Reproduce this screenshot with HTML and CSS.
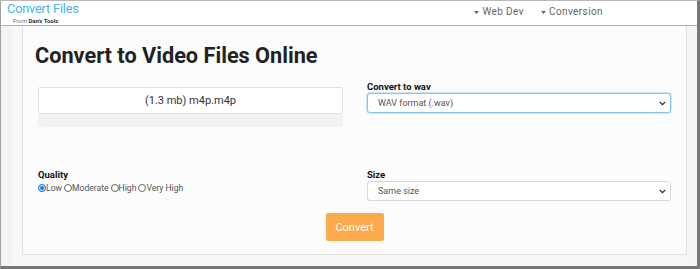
FILE: index.html
```html
<!DOCTYPE html>
<html>
<head>
<meta charset="utf-8">
<link rel="stylesheet" href="styles.css">
</head>
<body>
<div class="frame">
  <header class="topbar">
    <div class="brand">
      <div class="brand-title">Convert Files</div>
      <div class="brand-sub">From <b>Dan's Tools</b></div>
    </div>
    <nav class="nav">
      <span class="nav-item"><svg class="caret" width="5" height="3" viewBox="0 0 5 3"><path d="M0 0H5L2.5 3Z" fill="#666"/></svg>Web Dev</span>
      <span class="nav-item"><svg class="caret" width="5" height="3" viewBox="0 0 5 3"><path d="M0 0H5L2.5 3Z" fill="#666"/></svg>Conversion</span>
    </nav>
  </header>
  <div class="main">
    <div class="gutter-left"></div>
    <section class="card">
      <h1 class="title">Convert to Video Files Online</h1>
      <div class="grid">
        <div class="col">
          <div class="filebox">(1.3 mb) m4p.m4p</div>
          <div class="progress"></div>
        </div>
        <div class="col">
          <div class="label">Convert to wav</div>
          <div class="select focus">
            <span>WAV format (.wav)</span>
            <svg class="chev" width="7" height="5" viewBox="0 0 7 5"><path d="M0.8 1L3.5 3.7L6.2 1" fill="none" stroke="#333" stroke-width="1.3"/></svg>
          </div>
        </div>
        <div class="col row2">
          <div class="label">Quality</div>
          <div class="radios">
            <span class="radio checked"></span><span class="rtext">Low</span>
            <span class="radio"></span><span class="rtext">Moderate</span>
            <span class="radio"></span><span class="rtext">High</span>
            <span class="radio"></span><span class="rtext">Very High</span>
          </div>
        </div>
        <div class="col row2">
          <div class="label">Size</div>
          <div class="select">
            <span>Same size</span>
            <svg class="chev" width="7" height="5" viewBox="0 0 7 5"><path d="M0.8 1L3.5 3.7L6.2 1" fill="none" stroke="#333" stroke-width="1.3"/></svg>
          </div>
        </div>
      </div>
      <div class="actions">
        <button class="btn">Convert</button>
      </div>
    </section>
    <div class="gutter-right"></div>
  </div>
</div>
</body>
</html>
```
FILE: styles.css
```css
* { box-sizing: border-box; }
html, body { margin: 0; padding: 0; }
body {
  width: 700px;
  height: 269px;
  font-family: Roboto, "Liberation Sans", Arial, sans-serif;
  background: #fff;
  overflow: hidden;
}
.frame {
  width: 700px;
  height: 269px;
  border-left: 1px solid #a0a0a0;
  border-right: 3px solid #777;
  border-bottom: 3px solid #777;
  border-top: 1px solid #b8b8b8;
  background: #f7f7f7;
  display: flex;
  flex-direction: column;
}
.topbar {
  height: 25px;
  background: #fff;
  border-bottom: 1px solid #6cc9e9;
  display: flex;
  justify-content: space-between;
  align-items: flex-start;
  padding-left: 6px;
  flex: none;
}
.brand-title {
  font-size: 12.8px;
  line-height: 14px;
  color: #4ab3e6;
  margin-top: 1px;
  letter-spacing: -0.2px;
}
.brand-sub {
  font-size: 6px;
  line-height: 7px;
  color: #777;
  padding-left: 6px;
  margin-top: 1px;
}
.brand-sub b { color: #333; }
.nav {
  display: flex;
  gap: 17px;
  padding-right: 94px;
  padding-top: 5px;
}
.nav-item {
  font-size: 10px;
  line-height: 12px;
  color: #666;
  letter-spacing: 0.4px;
  display: flex;
  align-items: center;
}
.caret { margin-right: 3px; }
.main {
  flex: 1;
  display: flex;
  min-height: 0;
}
.gutter-left {
  width: 21px;
  flex: none;
  background: linear-gradient(to right, #f3f3f3 0, #f3f3f3 11px, #f8f8f8 11px);
}
.gutter-right {
  flex: 1;
  background: #f5f5f5;
}
.card {
  width: 665px;
  flex: none;
  height: 229px;
  background: #fcfcfc;
  border: 1px solid #e2e2e2;
  border-top: none;
  padding: 18px 15px 0 15px;
}
.title {
  margin: 0 0 0 -3px;
  font-size: 21.7px;
  line-height: 24px;
  font-weight: 700;
  color: #222;
}
.grid {
  display: grid;
  grid-template-columns: 305px 304px;
  column-gap: 24px;
  margin-top: 13px;
  align-items: start;
}
.row2 { margin-top: 42px; }
.label {
  font-size: 9.5px;
  line-height: 12px;
  font-weight: 700;
  color: #111;
}
.filebox {
  margin-top: 6px;
  height: 27px;
  background: #fff;
  border: 1px solid #e0e0e0;
  border-radius: 2px;
  font-size: 11px;
  color: #333;
  display: flex;
  align-items: center;
  justify-content: center;
}
.progress {
  height: 13px;
  background: #f2f2f2;
  border-radius: 0 0 3px 3px;
}
.select {
  position: relative;
  height: 20px;
  background: #fff;
  border: 1px solid #d8d8d8;
  border-radius: 3px;
  font-size: 9px;
  color: #555;
  display: flex;
  align-items: center;
  padding-left: 10px;
}
.select.focus {
  border-color: #86c3ee;
  box-shadow: 0 0 0 1px rgba(120, 190, 240, 0.35);
}
.chev {
  position: absolute;
  right: 4px;
  top: 7px;
}
.radios {
  display: flex;
  align-items: center;
  height: 14px;
  font-size: 8.6px;
  color: #555;
}
.radio {
  width: 8px;
  height: 8px;
  border-radius: 50%;
  border: 1px solid #666;
  background: #fff;
  flex: none;
}
.radio.checked {
  border: 1px solid #1a73e8;
  background: #1a73e8;
  box-shadow: inset 0 0 0 1px #fff;
}
.rtext { margin-right: 2px; }
.actions {
  display: flex;
  justify-content: center;
  margin-top: 12px;
}
.btn {
  width: 58px;
  height: 28px;
  border: none;
  border-radius: 2px;
  background: #ffa94d;
  color: #fff;
  font-family: Roboto, sans-serif;
  font-size: 11px;
  padding: 0;
}
```
